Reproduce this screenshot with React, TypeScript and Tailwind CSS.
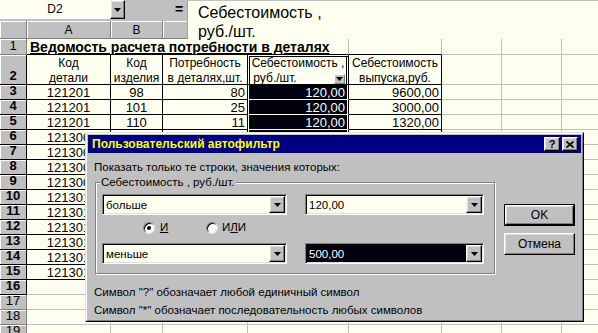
import React from "react";

const raised =
  "bg-[#c0c0c0] border border-t-white border-l-white border-r-black border-b-black shadow-[inset_-1px_-1px_0_#808080,inset_1px_1px_0_#dfdfdf]";
const sunken =
  "border border-t-[#808080] border-l-[#808080] border-r-white border-b-white shadow-[inset_1px_1px_0_#000,inset_-1px_-1px_0_#dfdfdf]";

const colW = [
  "w-[84px]",
  "w-[52px]",
  "w-[85px]",
  "w-[101px]",
  "w-[93px]",
  "w-[60px]",
  "w-[60px]",
  "w-[60px]",
];

function Tri() {
  return (
    <svg width="7" height="4" viewBox="0 0 7 4">
      <path d="M0 0H7L3.5 4Z" fill="#000" />
    </svg>
  );
}

function RH({ n }: { n: number }) {
  const bold = n >= 2 && n <= 16;
  return (
    <div
      className={`w-[27px] shrink-0 bg-[#c0c0c0] border-r border-b ${
        bold ? "border-black font-bold" : "border-[#808080]"
      } shadow-[inset_1px_1px_0_#fff] flex items-end justify-center text-[13px] leading-[14px] pb-px`}
    >
      {n}
    </div>
  );
}

function Cell({
  i,
  black,
  className = "",
  children,
}: {
  i: number;
  black?: boolean;
  className?: string;
  children?: React.ReactNode;
}) {
  return (
    <div
      className={`${colW[i]} shrink-0 border-r border-b ${
        black ? "border-black" : "border-[#c0c0c0]"
      } text-[12px] leading-[14px] pt-px px-[2px] whitespace-nowrap overflow-visible ${className}`}
    >
      {children}
    </div>
  );
}

type R = { n: number; a?: string; b?: string; c?: string; d?: string; e?: string };

const rows: R[] = [
  { n: 3, a: "121201", b: "98", c: "80", d: "120,00", e: "9600,00" },
  { n: 4, a: "121201", b: "101", c: "25", d: "120,00", e: "3000,00" },
  { n: 5, a: "121201", b: "110", c: "11", d: "120,00", e: "1320,00" },
  { n: 6, a: "121300" },
  { n: 7, a: "121300" },
  { n: 8, a: "121300" },
  { n: 9, a: "121300" },
  { n: 10, a: "121301" },
  { n: 11, a: "121301" },
  { n: 12, a: "121301" },
  { n: 13, a: "121301" },
  { n: 14, a: "121301" },
  { n: 15, a: "121301" },
  { n: 16 },
  { n: 17 },
  { n: 18 },
  { n: 19 },
];

function Combo({
  w,
  text,
  selected,
}: {
  w: string;
  text: string;
  selected?: boolean;
}) {
  return (
    <div className={`${w} h-[21px] shrink-0 flex bg-[#fffff0] p-px ${sunken}`}>
      <div
        className={`flex-1 flex items-center pl-[2px] text-[11.5px] leading-[14px] ${
          selected ? "bg-[#00000e] text-white" : ""
        }`}
      >
        {text}
      </div>
      <div className={`w-[16px] h-full flex items-center justify-center ${raised}`}>
        <Tri />
      </div>
    </div>
  );
}

function Radio({ checked }: { checked?: boolean }) {
  return (
    <div className="w-[12px] h-[12px] rounded-full bg-white border border-t-[#808080] border-l-[#808080] border-r-[#dfdfdf] border-b-[#dfdfdf] shadow-[inset_1px_1px_0_#000] flex items-center justify-center">
      {checked && <div className="w-[4px] h-[4px] rounded-full bg-black" />}
    </div>
  );
}

export default function App() {
  return (
    <div className="relative w-[598px] h-[333px] overflow-hidden bg-[#fffff0] font-['Liberation_Sans',Arial,sans-serif] text-black">
      {/* formula bar */}
      <div className="flex h-[21px] bg-[#c0c0c0] items-start">
        <div className="w-[110px] h-[19px] bg-[#fffff0] border-b border-white flex items-center justify-center text-[12px]">
          D2
        </div>
        <div className={`w-[15px] h-[19px] flex items-center justify-center ${raised}`}>
          <Tri />
        </div>
        <div className="ml-[50px] h-[19px] flex items-center text-[14px] font-bold">=</div>
      </div>

      {/* column headers */}
      <div className="flex h-[18px]">
        <div className="w-[27px] shrink-0 bg-[#c0c0c0] border-r border-b border-[#808080] shadow-[inset_1px_1px_0_#fff]" />
        {["A", "B", "C", "D", "E", "F", "G", "H"].map((l, i) => (
          <div
            key={l}
            className={`${colW[i]} shrink-0 bg-[#c0c0c0] border-r border-b border-[#808080] shadow-[inset_1px_1px_0_#fff] flex items-center justify-center text-[12px] ${
              l === "D" ? "font-bold" : ""
            }`}
          >
            {l}
          </div>
        ))}
      </div>

      {/* row 1 */}
      <div className="flex h-[16px]">
        <RH n={1} />
        <div className="w-[322px] shrink-0 border-r border-b border-[#c0c0c0] border-b-black pl-[3px] text-[14px] leading-[16px] font-bold underline whitespace-nowrap">
          Ведомость расчета потребности в деталях
        </div>
        <Cell i={4} className="border-b-black" />
        <Cell i={5} />
        <Cell i={6} />
        <Cell i={7} />
      </div>

      {/* row 2 */}
      <div className="flex h-[30px]">
        <RH n={2} />
        <Cell i={0} black className="text-center leading-[15px]">
          <div>Код</div>
          <div>детали</div>
        </Cell>
        <Cell i={1} black className="text-center leading-[15px]">
          <div>Код</div>
          <div>изделия</div>
        </Cell>
        <Cell i={2} black className="text-center leading-[15px]">
          <div>Потребность</div>
          <div>в деталях,шт.</div>
        </Cell>
        <div className="relative w-[101px] shrink-0 border-r border-b border-black shadow-[inset_1px_1px_0_#fffff0,inset_2px_2px_0_#000,inset_-1px_0_0_#fffff0,inset_-2px_0_0_#000] text-[12px] leading-[15px] pt-px text-center whitespace-nowrap">
          <div>Себестоимость ,</div>
          <div className="pr-[46px]">руб./шт.</div>
          <div className="absolute right-[3px] top-[19px] w-[11px] h-[10px] flex items-center justify-center bg-[#c0c0c0] border border-t-white border-l-white border-r-[#808080] border-b-[#808080]">
            <Tri />
          </div>
        </div>
        <Cell i={4} black className="text-center leading-[15px]">
          <div>Себестоимость</div>
          <div>выпуска,руб.</div>
        </Cell>
        <Cell i={5} />
        <Cell i={6} />
        <Cell i={7} />
      </div>

      {/* data rows */}
      {rows.map((r) => {
        const t = r.n <= 15;
        return (
          <div key={r.n} className="flex h-[15px]">
            <RH n={r.n} />
            <Cell i={0} black={t} className="text-center text-[13px]">
              {r.a}
            </Cell>
            <Cell i={1} black={t} className="text-center text-[13px]">
              {r.b}
            </Cell>
            <Cell i={2} black={t} className="text-right text-[13px]">
              {r.c}
            </Cell>
            {t ? (
              <Cell
                i={3}
                black
                className="border-b-[#fffff0] bg-[#00000e] text-white text-right text-[13px] pr-[3px] shadow-[inset_1px_0_0_#fffff0,inset_-1px_0_0_#fffff0]"
              >
                {r.d}
              </Cell>
            ) : (
              <Cell i={3} />
            )}
            <Cell i={4} black={t} className="text-right text-[13px]">
              {r.e}
            </Cell>
            <Cell i={5} />
            <Cell i={6} />
            <Cell i={7} />
          </div>
        );
      })}

      {/* formula text box overlay */}
      <div className="absolute left-[187px] top-[1px] w-[411px] h-[38px] bg-[#fffff0] border-l border-[#a0a0a0] pl-[10px] pt-[2px] text-[16px] leading-[19px] whitespace-nowrap">
        <div>Себестоимость ,</div>
        <div>руб./шт.</div>
      </div>

      {/* dialog */}
      <div className="absolute left-[85px] top-[132px] w-[499px] h-[190px] bg-[#c0c0c0] border border-t-[#dfdfdf] border-l-[#dfdfdf] border-r-black border-b-black">
        <div className="h-full border border-t-white border-l-white border-r-[#808080] border-b-[#808080] p-px flex flex-col">
          <div className="h-[18px] shrink-0 bg-[#000080] flex items-center pl-[4px] pr-[3px]">
            <span className="text-[#ffff00] font-bold text-[12px] leading-[14px]">
              Пользовательский автофильтр
            </span>
            <div className="ml-auto flex gap-[2px]">
              <div className={`w-[16px] h-[14px] flex items-center justify-center text-[11px] font-bold leading-none ${raised}`}>
                ?
              </div>
              <div className={`w-[16px] h-[14px] flex items-center justify-center ${raised}`}>
                <svg width="8" height="7" viewBox="0 0 8 7">
                  <path d="M0.5 0.5L7.5 6.5M7.5 0.5L0.5 6.5" stroke="#000" strokeWidth="1.6" />
                </svg>
              </div>
            </div>
          </div>

          <div className="pl-[6px] mt-[7px] text-[11.5px] leading-[14px] whitespace-nowrap">
            Показать только те строки, значения которых:
          </div>

          <div className="flex mt-[8px] pl-[7px]">
            <div className="relative w-[400px] h-[92px] shrink-0 border border-[#808080] shadow-[inset_1px_1px_0_#fff,1px_1px_0_#fff]">
              <span className="absolute -top-[8px] left-[4px] px-px bg-[#c0c0c0] text-[11.5px] leading-[14px] whitespace-nowrap">
                Себестоимость , руб./шт.
              </span>
              <div className="flex mt-[11px] ml-[6px] gap-[18px]">
                <Combo w="w-[185px]" text="больше" />
                <Combo w="w-[179px]" text="120,00" />
              </div>
              <div className="flex items-center mt-[7px] ml-[47px] h-[12px] text-[11.5px]">
                <div className="w-[63px] flex items-center">
                  <Radio checked />
                  <span className="ml-[5px] underline">И</span>
                </div>
                <div className="flex items-center">
                  <Radio />
                  <span className="ml-[4px]">
                    И<span className="underline">Л</span>И
                  </span>
                </div>
              </div>
              <div className="flex mt-[9px] ml-[6px] gap-[18px]">
                <Combo w="w-[185px]" text="меньше" />
                <Combo w="w-[179px]" text="500,00" selected />
              </div>
            </div>

            <div className="ml-[9px] mt-[22px] flex flex-col gap-[7px]">
              <div className="w-[71px] h-[22px] border border-black">
                <div className={`w-full h-full flex items-center justify-center text-[12px] ${raised}`}>
                  OK
                </div>
              </div>
              <div className={`w-[71px] h-[22px] flex items-center justify-center text-[12px] ${raised}`}>
                Отмена
              </div>
            </div>
          </div>

          <div className="pl-[6px] mt-[11px] text-[11.5px] leading-[14px] whitespace-nowrap">
            Символ "?" обозначает любой единичный символ
          </div>
          <div className="pl-[6px] mt-[4px] text-[11.5px] leading-[14px] whitespace-nowrap">
            Символ "*" обозначает последовательность любых символов
          </div>
        </div>
      </div>
    </div>
  );
}
